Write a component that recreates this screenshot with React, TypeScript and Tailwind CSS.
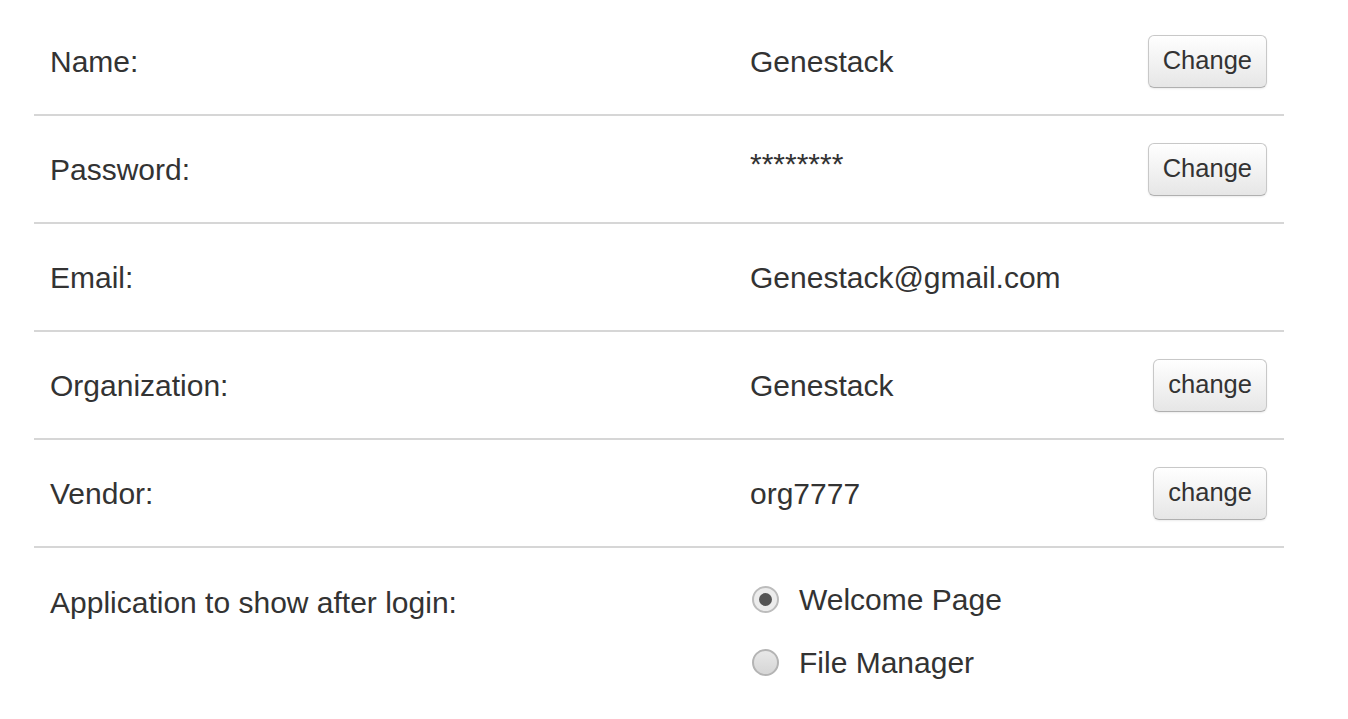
import React from "react";

const font = { fontFamily: '"Liberation Sans", Arial, Helvetica, sans-serif' };

const ChangeButton = ({ label }: { label: string }) => (
  <button className="h-[53px] px-[14px] rounded-[6px] border border-[#c8c8c8] border-b-[#b0b0b0] bg-gradient-to-b from-white to-[#e6e6e6] text-[25.5px] leading-none text-[#333] shadow-[0_1px_2px_rgba(0,0,0,0.08)]">
    {label}
  </button>
);

const Radio = ({ checked, label }: { checked?: boolean; label: string }) => (
  <label className="h-[63px] flex items-center gap-[20px]">
    <span
      className={
        "w-[27px] h-[27px] rounded-full border-2 flex items-center justify-center " +
        (checked
          ? "border-[#bcbcbc] bg-[#ececec]"
          : "border-[#b4b4b4] bg-gradient-to-b from-[#e8e8e8] to-[#d6d6d6]")
      }
    >
      {checked && <span className="w-[13px] h-[13px] rounded-full bg-[#555]" />}
    </span>
    <span>{label}</span>
  </label>
);

const Row = ({
  label,
  value,
  action,
}: {
  label: string;
  value: React.ReactNode;
  action?: string;
}) => (
  <div className="flex items-center h-[108px] border-b-2 border-[#d6d6d6]">
    <div className="w-[716px] pl-4">{label}</div>
    <div className="flex-1 flex items-center justify-between pr-[17px]">
      <span>{value}</span>
      {action && <ChangeButton label={action} />}
    </div>
  </div>
);

export default function App() {
  return (
    <div className="min-h-screen bg-white text-[30px] text-[#333]" style={font}>
      <div className="ml-[34px] w-[1250px] pt-[8px]">
        <Row label="Name:" value="Genestack" action="Change" />
        <Row label="Password:" value={<span className="relative -top-[6px]">********</span>} action="Change" />
        <Row label="Email:" value="Genestack@gmail.com" />
        <Row label="Organization:" value="Genestack" action="change" />
        <Row label="Vendor:" value="org7777" action="change" />
        <div className="flex">
          <div className="w-[716px] pl-4 pt-[22px] h-[86px] flex items-center">
            Application to show after login:
          </div>
          <div className="flex-1 pt-[20px] pl-[2px]">
            <Radio checked label="Welcome Page" />
            <Radio label="File Manager" />
          </div>
        </div>
      </div>
    </div>
  );
}
